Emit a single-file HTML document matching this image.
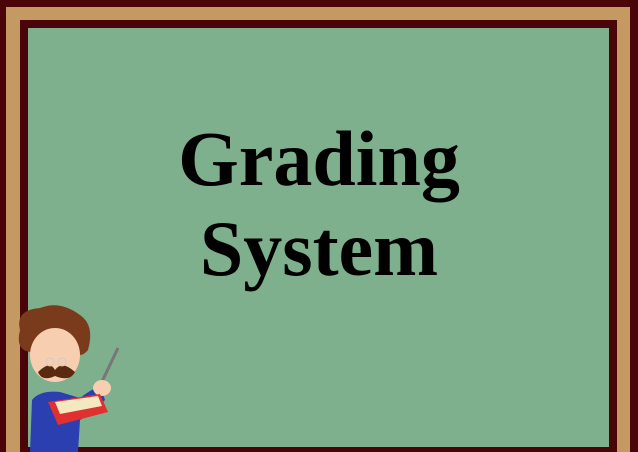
<!DOCTYPE html><html><head><style>
html,body{margin:0;width:638px;height:452px;overflow:hidden}
body{background:#4a0508;position:relative}
.tan{position:absolute;left:6px;top:7px;width:624px;height:445px;background:#c49a62}
.dk{position:absolute;left:20px;top:20px;width:597px;height:432px;background:#4a0508}
.gr{position:absolute;left:28px;top:28px;width:581px;height:419px;background:#7eb08d}
.t{position:absolute;left:0;width:638px;text-align:center;font:bold 78px "Liberation Serif",serif;color:#000;line-height:1}
</style></head><body>
<div class="tan"></div><div class="dk"></div><div class="gr"></div>
<div class="t" style="top:120px">Grading</div>
<div class="t" style="top:210px">System</div>
<svg style="position:absolute;left:0;top:290px" width="140" height="162">
<line x1="118" y1="58" x2="98" y2="100" stroke="#777" stroke-width="3"/>
<path d="M30 162 L32 110 Q40 100 60 102 L80 108 Q90 100 100 96 L105 110 Q90 125 80 130 L78 162Z" fill="#2b3fb0"/>
<path d="M20 40 Q15 20 40 18 Q60 10 80 25 Q95 35 88 60 Q80 70 70 60 L30 62 Q15 60 20 40Z" fill="#7a3a1c"/>
<ellipse cx="55" cy="65" rx="25" ry="27" fill="#f7cfb0"/>
<path d="M38 82 Q50 70 55 80 Q62 70 75 82 Q70 92 55 86 Q42 92 38 82Z" fill="#5a2a10"/>
<circle cx="50" cy="72" r="4" fill="none" stroke="#ccc"/><circle cx="62" cy="72" r="4" fill="none" stroke="#ccc"/>
<ellipse cx="102" cy="98" rx="9" ry="8" fill="#f7cfb0"/>
<path d="M48 112 L100 104 L108 122 L58 135Z" fill="#e03030"/>
<path d="M55 112 L98 106 L102 116 L60 124Z" fill="#f4e8c0"/>
</svg>
</body></html>
